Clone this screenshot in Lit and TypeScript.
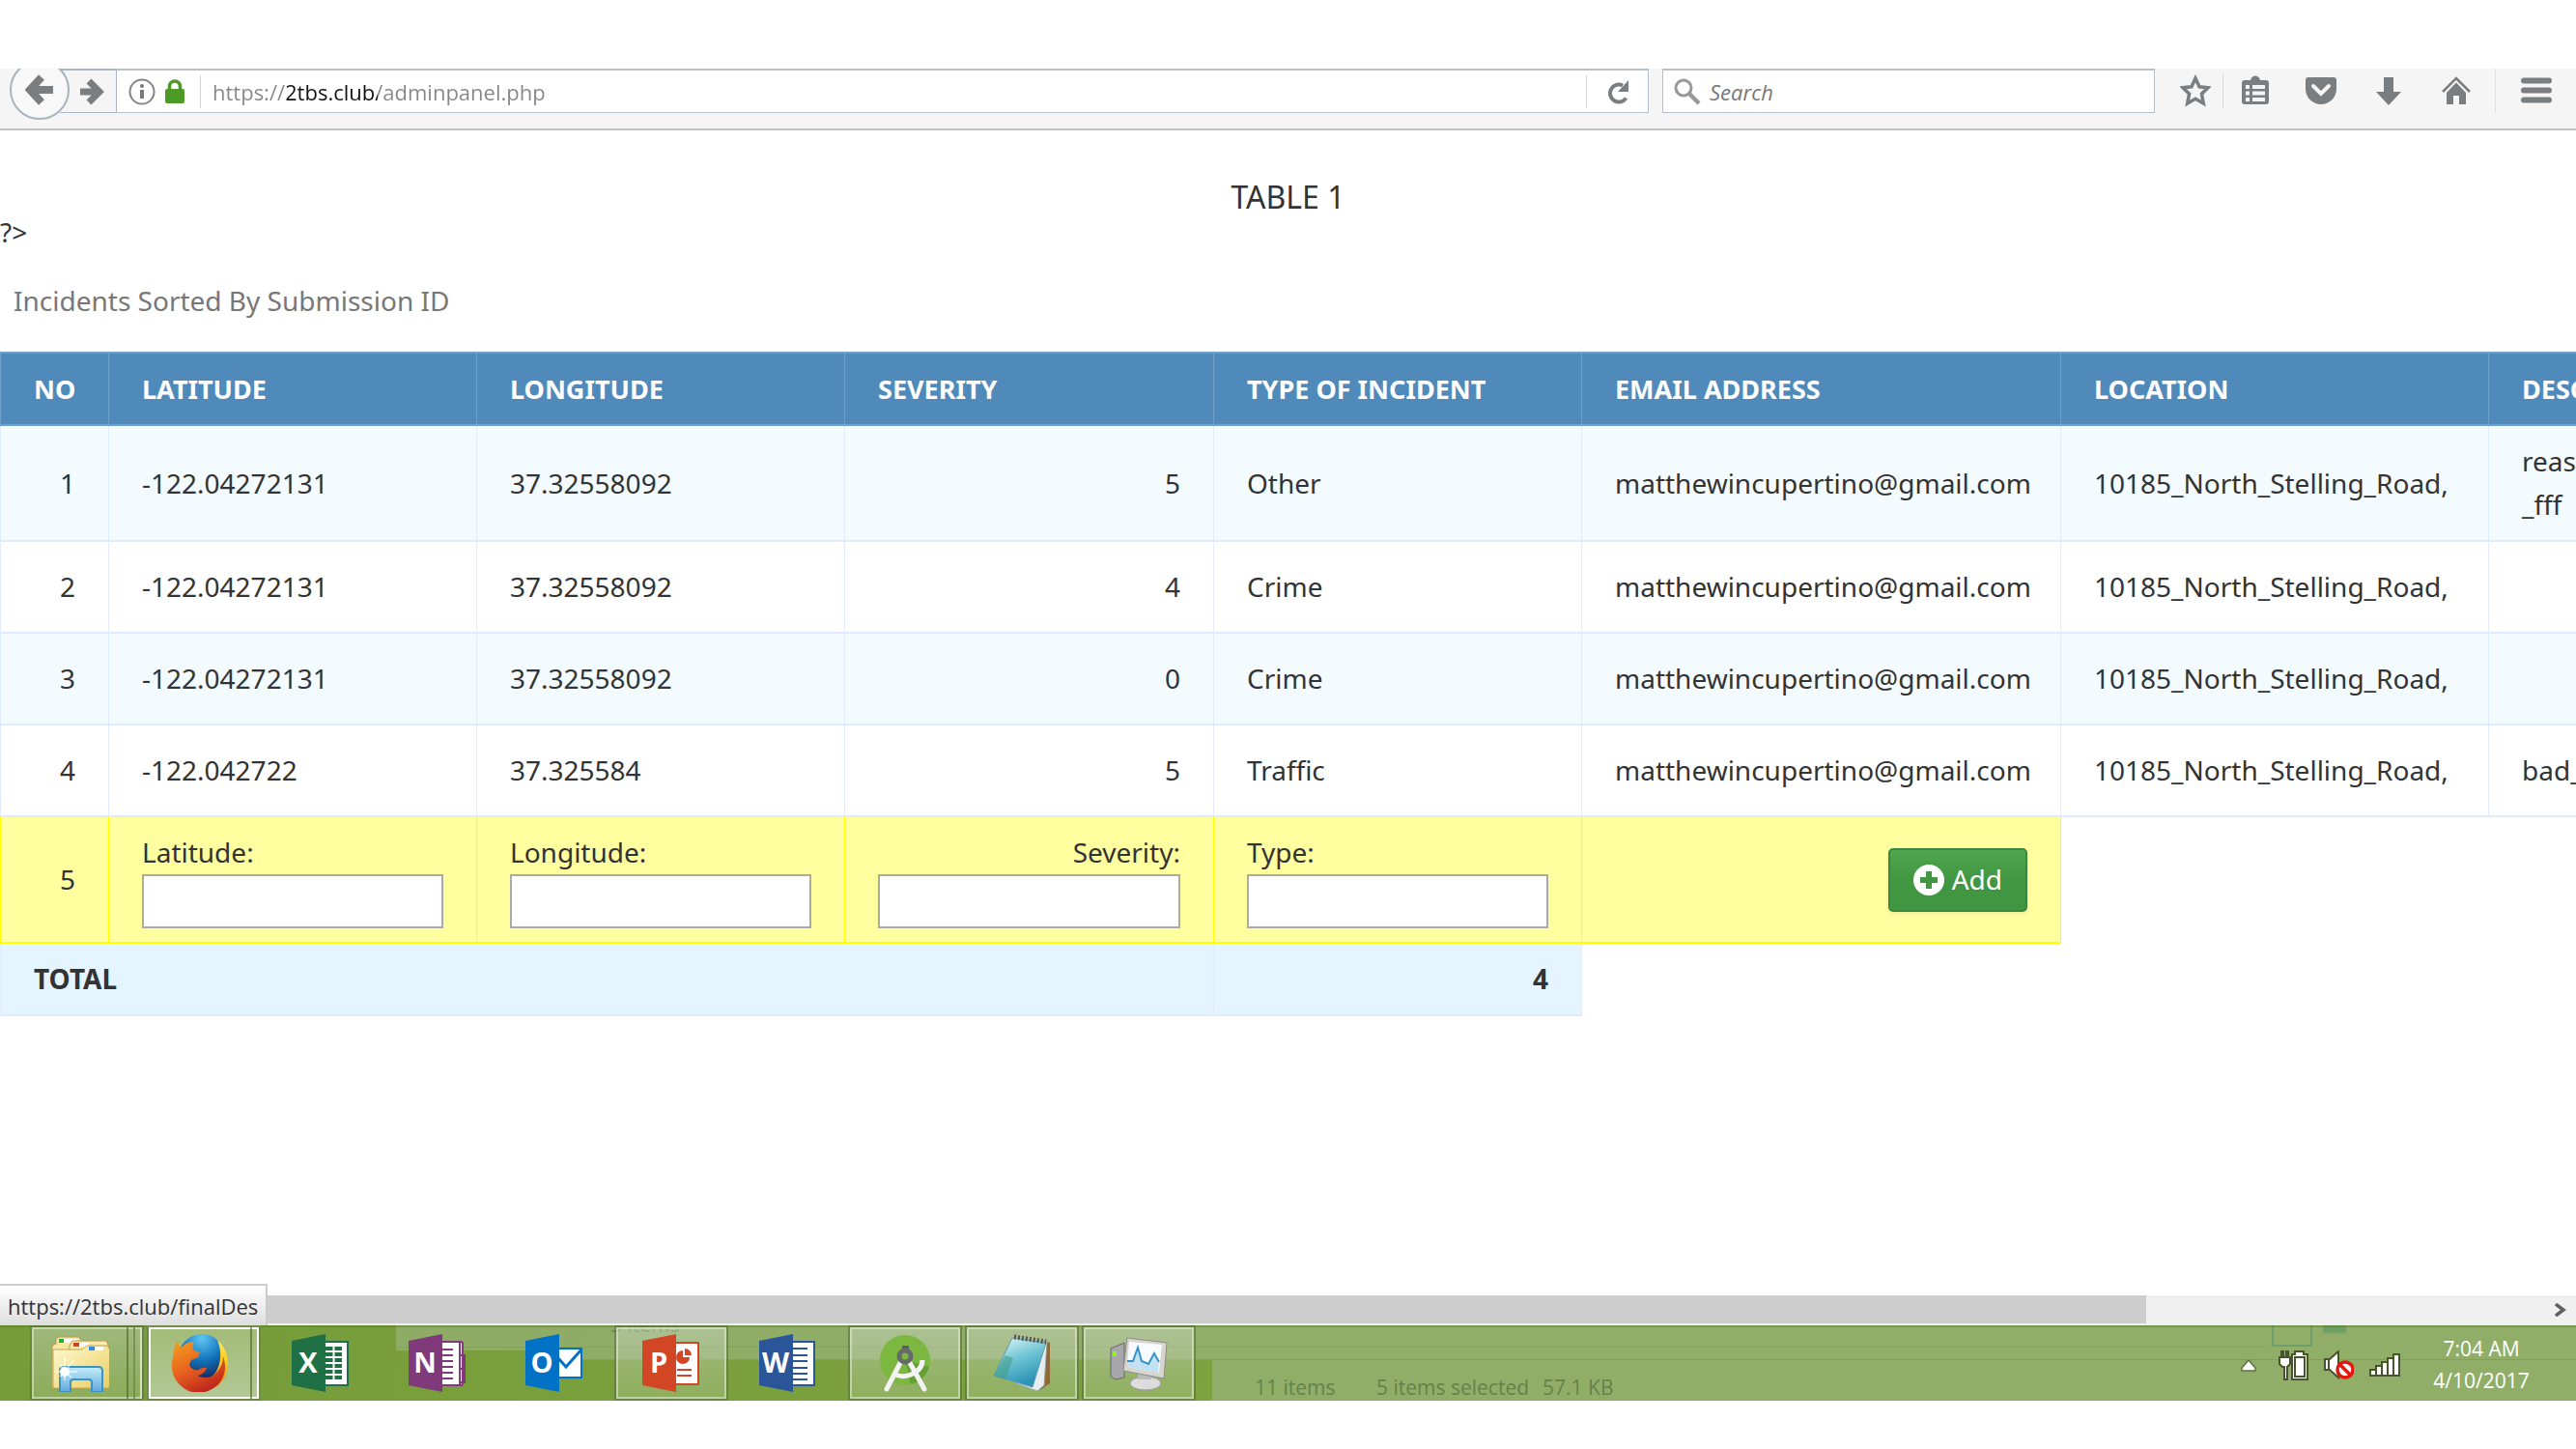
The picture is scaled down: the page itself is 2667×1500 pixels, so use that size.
import { LitElement, html, css, svg, nothing } from "lit";
import { customElement } from "lit/decorators.js";

interface Incident {
  no: number;
  lat: string;
  lng: string;
  severity: number;
  type: string;
  email: string;
  location: string;
  description: string[];
}

const EMAIL = "matthewincupertino@gmail.com";
const PLACE = "10185_North_Stelling_Road,";

const INCIDENTS: Incident[] = [
  { no: 1, lat: "-122.04272131", lng: "37.32558092", severity: 5, type: "Other", email: EMAIL, location: PLACE, description: ["reas", "_fff"] },
  { no: 2, lat: "-122.04272131", lng: "37.32558092", severity: 4, type: "Crime", email: EMAIL, location: PLACE, description: [] },
  { no: 3, lat: "-122.04272131", lng: "37.32558092", severity: 0, type: "Crime", email: EMAIL, location: PLACE, description: [] },
  { no: 4, lat: "-122.042722", lng: "37.325584", severity: 5, type: "Traffic", email: EMAIL, location: PLACE, description: ["bad_"] },
];

@customElement("browser-toolbar")
export class BrowserToolbar extends LitElement {
  static styles = css`
    :host {
      display: flex;
      align-items: flex-start;
      box-sizing: border-box;
      height: 64px;
      overflow: hidden;
      background: #f5f5f5;
      border-bottom: 2px solid #c1c1c1;
      font-family: "Open Sans", "Noto Sans", sans-serif;
    }
    button {
      padding: 0;
      border: 0;
      background: none;
      display: grid;
      place-items: center;
      flex: none;
    }
    svg { display: block; }
    .back {
      width: 62px;
      height: 62px;
      box-sizing: border-box;
      margin: -9px -10px 0 10px;
      border: 2px solid #a9b4bf;
      border-radius: 50%;
      background: #f8f8f8;
      position: relative;
    }
    .forward {
      width: 59px;
      height: 46px;
      box-sizing: border-box;
      padding-left: 8px;
      border: solid #a9b4c4;
      border-width: 2px 1px 1px 0;
    }
    .field {
      display: flex;
      align-items: center;
      box-sizing: border-box;
      height: 46px;
      background: #fff;
      border: solid #b6c0cc;
      border-width: 2px 1px 1px 1px;
    }
    .address { flex: 1; border-left: 0; }
    .search { width: 510px; margin-left: 14px; padding-left: 10px; gap: 8px; }
    .identity { display: flex; align-items: center; gap: 10px; padding: 0 16px 0 12px; }
    .rule { width: 1px; height: 34px; background: #d5d5d5; flex: none; }
    input {
      flex: 1;
      min-width: 0;
      border: 0;
      padding: 0;
      outline: 0;
      background: none;
      font: 22px/32px "Open Sans", "Noto Sans", sans-serif;
      color: #868686;
    }
    .url {
      margin-left: 12px;
      background: linear-gradient(90deg, #868686 77px, #111 77px, #111 171px, #868686 171px);
      -webkit-background-clip: text;
      background-clip: text;
      -webkit-text-fill-color: transparent;
    }
    .query::placeholder { color: #777; font-style: italic; opacity: 1; }
    .reload { width: 63px; height: 43px; }
    .actions { display: flex; align-items: center; height: 46px; padding-left: 26px; }
    .tool { width: 70px; height: 44px; }
    .star { width: 32px; height: 44px; margin-right: 12px; }
    .list { width: 66px; height: 44px; }
    .menu { width: 84px; height: 46px; border-left: 1px solid #dedede; margin-left: 5px; }
  `;

  render() {
    return html`
      <button class="back" aria-label="Back">
        <svg width="30" height="32" viewBox="0 0 30 32"><path d="M17 3 5 16l12 13M6 16h23" fill="none" stroke="#7b7e81" stroke-width="8"/></svg>
      </button>
      <button class="forward" aria-label="Forward">
        <svg width="26" height="28" viewBox="0 0 26 28"><path d="M10 3l11 11-11 11M20 14H1" fill="none" stroke="#7b7e81" stroke-width="7"/></svg>
      </button>
      <div class="field address">
        <div class="identity">
          <svg width="28" height="30" viewBox="0 0 28 30"><circle cx="14" cy="15" r="12.500" fill="none" stroke="#858585" stroke-width="2"/><circle cx="14" cy="9" r="2" fill="#777"/><path d="M14 13v9" stroke="#777" stroke-width="4"/></svg>
          <svg width="20" height="26" viewBox="0 0 20 26"><path d="M4.500 12V7.500a5.500 5.500 0 0 1 11 0V12" fill="none" stroke="#4d9a26" stroke-width="3.500"/><rect y="10" width="20" height="15" rx="2" fill="#4d9a26"/></svg>
        </div>
        <span class="rule"></span>
        <input class="url" aria-label="Address" .value=${"https://2tbs.club/adminpanel.php"} />
        <span class="rule"></span>
        <button class="reload" aria-label="Reload">
          <svg width="24" height="26" viewBox="0 0 24 26"><path d="M20.500 19.500A9 9 0 1 1 17 6.500" fill="none" stroke="#7b7e81" stroke-width="4"/><path d="M23 1v12H12z" fill="#7b7e81"/></svg>
        </button>
      </div>
      <div class="field search">
        <svg width="30" height="30" viewBox="0 0 30 30"><circle cx="11" cy="11" r="8" fill="none" stroke="#999" stroke-width="3"/><path d="M17 17l10 10" stroke="#999" stroke-width="4.500"/></svg>
        <input class="query" aria-label="Search" placeholder="Search" />
      </div>
      <div class="actions">
        <button class="star" aria-label="Bookmark this page">
          <svg width="32" height="34" viewBox="0 0 32 34"><path d="M16 4l4 8.800 9 1-6.600 6.400 1.900 9.800L16 25.200 7.700 30l1.900-9.800L3 13.800l9-1z" fill="none" stroke="#7b7e81" stroke-width="3.500"/></svg>
        </button>
        <span class="rule"></span>
        <button class="list" aria-label="Bookmarks list">
          <svg width="28" height="32" viewBox="0 0 28 32"><path d="M3 5h6c1-6 9-6 10 0h6a3 3 0 0 1 3 3v19a3 3 0 0 1-3 3H3a3 3 0 0 1-3-3V8a3 3 0 0 1 3-3z" fill="#7b7e81"/><path d="M4 10h4v4H4zM11 10h13v4H11zM4 16.500h4v4H4zM11 16.500h13v4H11zM4 23h4v4H4zM11 23h13v4H11z" fill="#f5f5f5"/></svg>
        </button>
        <button class="tool" aria-label="Save to Pocket">
          <svg width="32" height="30" viewBox="0 0 32 30"><path d="M3 1h26a3 3 0 0 1 3 3v9a16 16 0 0 1-32 0V4a3 3 0 0 1 3-3z" fill="#7b7e81"/><path d="M8 10l8 8 8-8" fill="none" stroke="#f5f5f5" stroke-width="4" stroke-linecap="round"/></svg>
        </button>
        <button class="tool" aria-label="Downloads">
          <svg width="28" height="30" viewBox="0 0 28 30"><path d="M9 1h10v15h8L14 30 1 16h8z" fill="#7b7e81"/></svg>
        </button>
        <button class="tool" aria-label="Home">
          <svg width="30" height="30" viewBox="0 0 30 30"><path d="M1 16L15 2l14 14" fill="none" stroke="#7b7e81" stroke-width="2.600"/><path d="M15 6.500L25 17v12h-7v-9h-6v9H5V17z" fill="#7b7e81"/></svg>
        </button>
        <button class="menu" aria-label="Open menu">
          <svg width="32" height="28" viewBox="0 0 32 28"><path d="M3 3.500h26M3 13.500h26M3 23.500h26" stroke="#7b7e81" stroke-width="6" stroke-linecap="round"/></svg>
        </button>
      </div>
    `;
  }
}

@customElement("incident-table")
export class IncidentTable extends LitElement {
  static styles = css`
    :host {
      display: block;
      overflow: hidden;
      font: 28px/45px "Noto Sans", "Open Sans", sans-serif;
      color: #333;
    }
    table { border-collapse: collapse; table-layout: fixed; width: 2960px; }
    caption {
      text-align: left;
      color: #777;
      padding: 30px 14px;
    }
    .c-no { width: 112px; }
    .c-mid { width: 381px; }
    .c-type { width: 382px; }
    .c-mail { width: 496px; }
    .c-loc { width: 443px; }
    th, td {
      box-sizing: border-box;
      padding: 14px 34px;
      border: 1px solid #e0ebff;
      text-align: left;
      vertical-align: middle;
      font-weight: 400;
      white-space: nowrap;
    }
    thead th {
      background: #508abb;
      border: solid #6ea1cc;
      border-width: 2px 1px;
      color: #fff;
      font-size: 27px;
      font-weight: 700;
      text-transform: uppercase;
    }
    tbody td { height: 95px; border-bottom-width: 2px; }
    .odd td { background: #f4fbff; }
    .num { text-align: right; }
    .entry td {
      background: #ffffa0;
      border: solid #ffff00;
      border-width: 0 1px 2px 1px;
    }
    tfoot td { background: #e5f5ff; font-weight: 700; border-bottom-width: 2px; }
    .blank.blank { border: 0; background: none; }
    label { display: block; }
    input {
      display: block;
      box-sizing: border-box;
      width: 100%;
      height: 56px;
      padding: 4px 8px;
      border: 2px solid #aaa;
      background: #fff;
      font: inherit;
    }
    .add {
      display: inline-flex;
      align-items: center;
      gap: 8px;
      height: 66px;
      padding: 0 24px;
      border: 2px solid #3b8640;
      border-radius: 5px;
      background: linear-gradient(#51a750, #419641 50%);
      box-shadow: 0 3px 3px rgba(0, 0, 0, 0.06);
      color: #fff;
      font: inherit;
      vertical-align: middle;
    }
  `;

  private field(id: string, text: string, num = false) {
    return html`<td class=${num ? "num" : nothing}>
      <label for=${id}>${text}</label><input id=${id} type="text" />
    </td>`;
  }

  render() {
    return html`
      <table>
        <caption>Incidents Sorted By Submission ID</caption>
        <colgroup>
          <col class="c-no" /><col class="c-mid" /><col class="c-mid" /><col class="c-type" />
          <col class="c-mid" /><col class="c-mail" /><col class="c-loc" /><col />
        </colgroup>
        <thead>
          <tr>
            ${["No", "Latitude", "Longitude", "Severity", "Type of Incident", "Email Address", "Location", "Description"].map(
              (h) => html`<th scope="col">${h}</th>`
            )}
          </tr>
        </thead>
        <tbody>
          ${INCIDENTS.map(
            (r) => html`<tr class=${r.no % 2 ? "odd" : "even"}>
              <td class="num">${r.no}</td>
              <td>${r.lat}</td>
              <td>${r.lng}</td>
              <td class="num">${r.severity}</td>
              <td>${r.type}</td>
              <td>${r.email}</td>
              <td>${r.location}</td>
              <td>${r.description.map((line, i) => (i ? html`<br />${line}` : line))}</td>
            </tr>`
          )}
          <tr class="entry">
            <td class="num">5</td>
            ${this.field("lat", "Latitude:")}
            ${this.field("lng", "Longitude:")}
            ${this.field("sev", "Severity:", true)}
            ${this.field("type", "Type:")}
            <td class="num">
              <button class="add">
                <svg width="32" height="32" viewBox="0 0 32 32"><circle cx="16" cy="16" r="16" fill="#fff"/><path d="M16 7v18M7 16h18" stroke="#419641" stroke-width="6"/></svg>
                Add
              </button>
            </td>
            <td class="blank" colspan="2"></td>
          </tr>
        </tbody>
        <tfoot>
          <tr>
            <td colspan="4">TOTAL</td>
            <td class="num">4</td>
            <td class="blank" colspan="3"></td>
          </tr>
        </tfoot>
      </table>
    `;
  }
}

/* Office tile: a slanted cover with its letter over a white document. */
const office = (color: string, letter: string, page: unknown) => svg`
  ${page}
  <path d="M0 7L35 0v60L0 53z" fill=${color}/>
  <text x="17" y="40" text-anchor="middle" class="letter">${letter}</text>`;

const ICONS = {
  explorer: svg`
    <defs>
      <linearGradient id="fold" x2="1" y2="1"><stop stop-color="#fff9cf"/><stop offset="1" stop-color="#e9cd62"/></linearGradient>
      <linearGradient id="stand" y2="1" x2="0"><stop stop-color="#c4eefa"/><stop offset="1" stop-color="#5fa9dc"/></linearGradient>
    </defs>
    <path d="M1 12l4-2V5l3-2h20l3 3v50H1z" fill="#f7e7a4" stroke="#b9974c"/>
    <rect x="8" y="5" width="18" height="4" fill="#fff"/><rect x="8" y="5" width="5" height="4" fill="#17b52c"/>
    <path d="M19 12l3-5h35l2 4v45H19z" fill="#f9eab0" stroke="#b9974c"/>
    <rect x="23" y="9" width="16" height="4" fill="#fff"/><rect x="23" y="9" width="6" height="4" fill="#d2401f"/>
    <path d="M2 16h30l5-4h21l3 4v38l-2 2H2z" fill="url(#fold)" stroke="#c9a24b"/>
    <rect x="39" y="13" width="15" height="4" fill="#fff"/><rect x="39" y="13" width="6" height="4" fill="#2a8ee6"/>
    <path d="M9 60V38q0-4 4-4h36q4 0 4 4v22H42V50q0-3-3-3H23q-3 0-3 3v10z" fill="url(#stand)" stroke="#3f94bd" stroke-width="2"/>
    <path d="M14 24v24M3 39h24M8 31l13 14M24 27L9 44" stroke="#fff" stroke-width="1.500" opacity=".7"/>
    <circle cx="14" cy="39" r="5" fill="#fff" opacity=".9"/>`,
  firefox: svg`
    <defs>
      <radialGradient id="globe" cx=".5" cy=".1" r=".9"><stop stop-color="#5fc6f2"/><stop offset=".5" stop-color="#1377bd"/><stop offset="1" stop-color="#13235a"/></radialGradient>
      <linearGradient id="fox" x1=".2" x2=".7" y2="1"><stop stop-color="#f39a1f"/><stop offset=".5" stop-color="#e8601f"/><stop offset="1" stop-color="#b8201c"/></linearGradient>
      <linearGradient id="tail" x2="0" y2="1"><stop stop-color="#ffe95a"/><stop offset=".5" stop-color="#fbc614"/><stop offset="1" stop-color="#e96a1c"/></linearGradient>
    </defs>
    <circle cx="31" cy="24" r="24" fill="url(#globe)"/>
    <path d="M47 6c14 12 15 34 2 46-8 7-18 8-26 5l10-10c14 0 22-22 14-41z" fill="url(#tail)"/>
    <path d="M6 6c0 4 1 6 4 8 3-4 7-6 13-6-2 3-2 6 0 9l6 2-2 5-7 3-2 5c2 4 5 6 9 5 3-1 5-3 9-2-1 4-5 7-9 8 7 4 15 2 20-4 4-5 6-10 6-16 4 11 2 22-6 30-10 9-25 11-36 2C1 47-2 36 1 24 2 16 3 10 6 6z" fill="url(#fox)"/>`,
  excel: office("#1f7145", "X", svg`<rect x="30" y="8" width="28" height="45" fill="#fff" stroke="#1f7145" stroke-width="2"/>
    <path d="M35 15h17M35 21h17M35 27h17M35 33h17M35 39h17M35 45h17" stroke="#1f7145" stroke-width="4"/><path d="M43.500 10v38" stroke="#fff" stroke-width="2"/>`),
  onenote: office("#80397b", "N", svg`<rect x="30" y="8" width="26" height="45" rx="2" fill="#fff" stroke="#80397b" stroke-width="2"/>
    <path d="M35 16h11M35 22h11M35 28h11M35 34h11M35 40h11M35 46h11" stroke="#80397b" stroke-width="2"/><path d="M53 9v43M53 22h5v28h-4M53 36h5" fill="none" stroke="#80397b" stroke-width="2"/>`),
  outlook: office("#0072c6", "O", svg`<rect x="30" y="15" width="28" height="30" fill="#fff" stroke="#0072c6" stroke-width="2"/><path d="M34 25l8 9 16-18" fill="none" stroke="#0072c6" stroke-width="3"/>`),
  powerpoint: office("#d24625", "P", svg`<rect x="30" y="9" width="28" height="43" fill="#fff" stroke="#d24625" stroke-width="2"/>
    <path d="M42 17v7h7a7 7 0 1 1-7-7z" fill="#d24625"/><path d="M44 15a7 7 0 0 1 7 7h-7z" fill="#d24625"/><path d="M36 37h15M36 43h15" stroke="#d24625" stroke-width="2"/>`),
  word: office("#2a5699", "W", svg`<rect x="30" y="8" width="27" height="45" fill="#fff" stroke="#2a5699" stroke-width="2"/>
    <path d="M35 15h15M35 22h15M35 28h15M35 35h15M35 41h15M35 47h15" stroke="#2a5699" stroke-width="2"/>`),
  studio: svg`
    <circle cx="30" cy="27" r="26" fill="#7cb83f"/><path d="M30 27L55 34A26 26 0 0 1 36 52z" fill="#669f38"/>
    <path d="M11 57L26 28M50 57L34 28" stroke="#f3f3f3" stroke-width="5" stroke-linecap="round"/>
    <path d="M18 41q8 5 18 1 12-5 12-15" fill="none" stroke="#f3f3f3" stroke-width="5"/>
    <path d="M27 12h7v7h-7z" fill="#5c6062"/><circle cx="30" cy="23" r="6" fill="#7cb83f" stroke="#666a6c" stroke-width="5"/>`,
  notepad: svg`
    <defs><linearGradient id="pad" x2=".4" y2="1"><stop stop-color="#eafafa"/><stop offset=".5" stop-color="#72c6d6"/><stop offset="1" stop-color="#2c93b4"/></linearGradient></defs>
    <path d="M54 7l5 2v42l-10 7z" fill="#8d6a35"/><path d="M50 8h6l-3 45-7 6-22-8z" fill="#e8edf0" stroke="#9aa5aa"/>
    <path d="M20 4l35 5-14 46L1 43z" fill="url(#pad)" stroke="#5a9db0"/>
    <path d="M13 22l8 3-8 22L1 43z" fill="#3f9a80" opacity=".55"/>
    <path d="M22 3l33 5" stroke="#555" stroke-width="5" stroke-dasharray="2 2"/>`,
  monitor: svg`
    <path d="M1 15l14-6v36L6 47l-5-3z" fill="#a7a7ab" stroke="#66666a"/><rect x="3" y="18" width="4" height="5" fill="#8ff61b"/>
    <ellipse cx="37" cy="51" rx="16" ry="7" fill="#dcdcdc" stroke="#999"/><path d="M29 38h14v9H29z" fill="#bbb"/>
    <path d="M18 4l41 5-3 37-42-8z" fill="#d8d5ce" stroke="#8b8b8b"/><path d="M20 8l34 3-3 29-33-6z" fill="#f7fbff"/>
    <path d="M18 29l6 0 5-15 4 14 7 3 6-12 5 12-1 9-32-6z" fill="#c2e2f4"/><path d="M18 28l6 0 5-14 4 14 7 3 6-11 5 9" fill="none" stroke="#3793c6" stroke-width="2"/>`,
};

@customElement("task-bar")
export class TaskBar extends LitElement {
  static styles = css`
    :host {
      display: flex;
      align-items: stretch;
      position: relative;
      box-sizing: border-box;
      height: 78px;
      overflow: hidden;
      background: linear-gradient(100deg, #769c39, #7da341 50%);
      font: 21px/33px "Open Sans", "Noto Sans", sans-serif;
    }
    .edge {
      position: absolute;
      inset: 0 0 auto 0;
      height: 2px;
      background: rgba(70, 105, 20, 0.35);
    }
    .ghost { position: absolute; background: rgba(166, 186, 146, 0.5); }
    .ghost-a { left: 410px; top: 0; width: 175px; height: 26px; }
    .ghost-b { left: 585px; top: 0; right: 0; height: 36px; border-bottom: 1px solid rgba(95, 130, 60, 0.3); box-sizing: border-box; }
    .ghost-c { left: 1255px; top: 36px; right: 0; bottom: 0; }
    .ghost-line { position: absolute; left: 410px; right: 320px; top: 22px; height: 1px; background: rgba(95, 130, 60, 0.25); }
    .ghost-view { position: absolute; left: 2352px; top: 0; width: 42px; height: 22px; box-sizing: border-box; border: 2px solid #6c9f6c; border-top: 0; }
    .ghost-pic { position: absolute; left: 2404px; top: 0; width: 26px; height: 9px; box-sizing: border-box; border: 2px solid #86a266; border-top: 0; background: #6c9f60; }
    .ghost-text { position: absolute; color: #64824a; white-space: nowrap; display: flex; }
    .ghost-top { left: 632px; top: -16px; line-height: 30px; }
    .ghost-status { left: 1299px; top: 48px; gap: 14px; }
    .count { width: 112px; }
    .apps { display: flex; gap: 3px; padding-left: 31px; position: relative; }
    .app {
      box-sizing: border-box;
      width: 118px;
      padding: 0;
      border: 2px solid transparent;
      background: none;
      display: grid;
      place-items: center;
    }
    .open {
      border-color: rgba(70, 100, 30, 0.6);
      background: linear-gradient(rgba(200, 212, 190, 0.5), rgba(180, 200, 150, 0.35));
      box-shadow: inset 0 0 0 2px rgba(225, 235, 210, 0.6);
    }
    .active { background: linear-gradient(#a3bb78, #b3c896); box-shadow: inset 0 0 0 2px #fff; }
    .stacked { display: flex; align-items: stretch; justify-content: flex-start; }
    .stacked svg { margin: auto; }
    .slice { width: 7px; box-sizing: border-box; border: solid rgba(225, 235, 210, 0.6); border-width: 0 2px 0 0; box-shadow: -2px 0 0 rgba(70, 100, 30, 0.6); }
    .active .slice { border-color: #fff; }
    .letter { font: 700 29px "Open Sans", sans-serif; fill: #fff; }
    .tray { display: flex; align-items: center; gap: 16px; margin-left: auto; padding: 4px 46px 0 0; position: relative; color: #fff; }
    .tray svg { display: block; }
    .more { margin-right: 6px; padding: 0; border: 0; background: none; }
    .clock { width: 104px; margin-left: 16px; text-align: center; white-space: nowrap; }
  `;

  private app(name: keyof typeof ICONS, label: string, state = "", slices = 0) {
    return html`<button class="app ${state} ${slices ? "stacked" : ""}" aria-label=${label}>
      <svg width="60" height="60" viewBox="0 0 60 60">${ICONS[name]}</svg>
      ${Array.from({ length: slices }, () => html`<span class="slice"></span>`)}
    </button>`;
  }

  render() {
    return html`
      <div class="ghost ghost-a"></div>
      <div class="ghost ghost-b"></div>
      <div class="ghost ghost-c"></div>
      <div class="ghost-line"></div>
      <div class="ghost-view"></div>
      <div class="ghost-pic"></div>
      <div class="ghost-text ghost-top">5 items</div>
      <div class="ghost-text ghost-status"><span class="count">11 items</span><span>5 items selected</span><span>57.1 KB</span></div>
      <div class="edge"></div>
      <nav class="apps">
        ${this.app("explorer", "File Explorer", "open", 2)}
        ${this.app("firefox", "Firefox", "open active", 1)}
        ${this.app("excel", "Excel")}
        ${this.app("onenote", "OneNote")}
        ${this.app("outlook", "Outlook")}
        ${this.app("powerpoint", "PowerPoint", "open")}
        ${this.app("word", "Word")}
        ${this.app("studio", "Android Studio", "open")}
        ${this.app("notepad", "Notepad", "open")}
        ${this.app("monitor", "Task Manager", "open")}
      </nav>
      <div class="tray">
        <button class="more" aria-label="Show hidden icons">
          <svg width="18" height="13" viewBox="0 0 18 13"><path d="M9 1l7 8v3H2V9z" fill="#fff" stroke="#5c7040" stroke-width="1.500"/></svg>
        </button>
        <svg width="31" height="31" viewBox="0 0 31 31"><g fill="#fff" stroke="#46552c" stroke-width="2"><path d="M3 1h2v6h3V1h2v6h2v7l-3 3v13H6V17H4l-3-3V7h2z"/><path d="M17 4V1h9v3h4v26H14V4z"/></g><rect x="17" y="7" width="10" height="20" fill="none" stroke="#46552c" stroke-width="2"/></svg>
        <svg width="31" height="30" viewBox="0 0 31 30"><path d="M1 9h5l9-8v27l-9-8H1z" fill="#fff" stroke="#46552c" stroke-width="2"/><path d="M5 9v11" stroke="#46552c" stroke-width="2"/><circle cx="22" cy="20" r="8" fill="#fff" stroke="#e3170f" stroke-width="3.500"/><path d="M16 14l12 12" stroke="#e3170f" stroke-width="3.500"/></svg>
        <svg width="32" height="24" viewBox="0 0 32 24"><g fill="#fff" stroke="#46552c" stroke-width="2"><path d="M1 17h6v6H1zM7 13h6v10H7zM13 9h6v14h-6zM19 5h6v18h-6zM25 1h6v22h-6z"/></g></svg>
        <div class="clock"><div>7:04 AM</div><div>4/10/2017</div></div>
      </div>
    `;
  }
}

@customElement("app-root")
export class AppRoot extends LitElement {
  static styles = css`
    :host {
      display: flex;
      flex-direction: column;
      box-sizing: border-box;
      min-height: 100vh;
      padding: 71px 0 50px;
      overflow: hidden;
      background: #fff;
      color: #333;
    }
    main {
      flex: 1;
      min-width: 0;
      padding-top: 50px;
      font: 28px/37px "Noto Sans", "Open Sans", sans-serif;
    }
    .title { margin: 0; font: inherit; font-size: 32px; text-align: center; }
    .stray { margin: 0; }
    .bottom { position: relative; height: 31px; background: #f0f0f0; display: flex; align-items: flex-start; }
    .thumb { width: calc(100% - 445px); height: 29px; background: #cdcdcd; }
    .right { margin-left: auto; padding: 0; border: 0; background: none; width: 32px; height: 29px; display: grid; place-items: center; }
    .status {
      position: absolute;
      left: 0;
      bottom: 0;
      box-sizing: border-box;
      height: 43px;
      padding: 0 8px;
      border: solid #ccc;
      border-width: 2px 2px 0 0;
      background: linear-gradient(#fff, #dedede);
      font: 22px/42px "Open Sans", "Noto Sans", sans-serif;
    }
  `;

  render() {
    return html`
      <browser-toolbar></browser-toolbar>
      <main>
        <h1 class="title">TABLE 1</h1>
        <p class="stray">?&gt;</p>
        <incident-table></incident-table>
      </main>
      <div class="bottom">
        <div class="thumb"></div>
        <button class="right" aria-label="Scroll right">
          <svg width="12" height="14" viewBox="0 0 12 14"><path d="M1 1l8 6-8 6" fill="none" stroke="#606060" stroke-width="3.500"/></svg>
        </button>
        <div class="status">https://2tbs.club/finalDes</div>
      </div>
      <task-bar></task-bar>
    `;
  }
}
